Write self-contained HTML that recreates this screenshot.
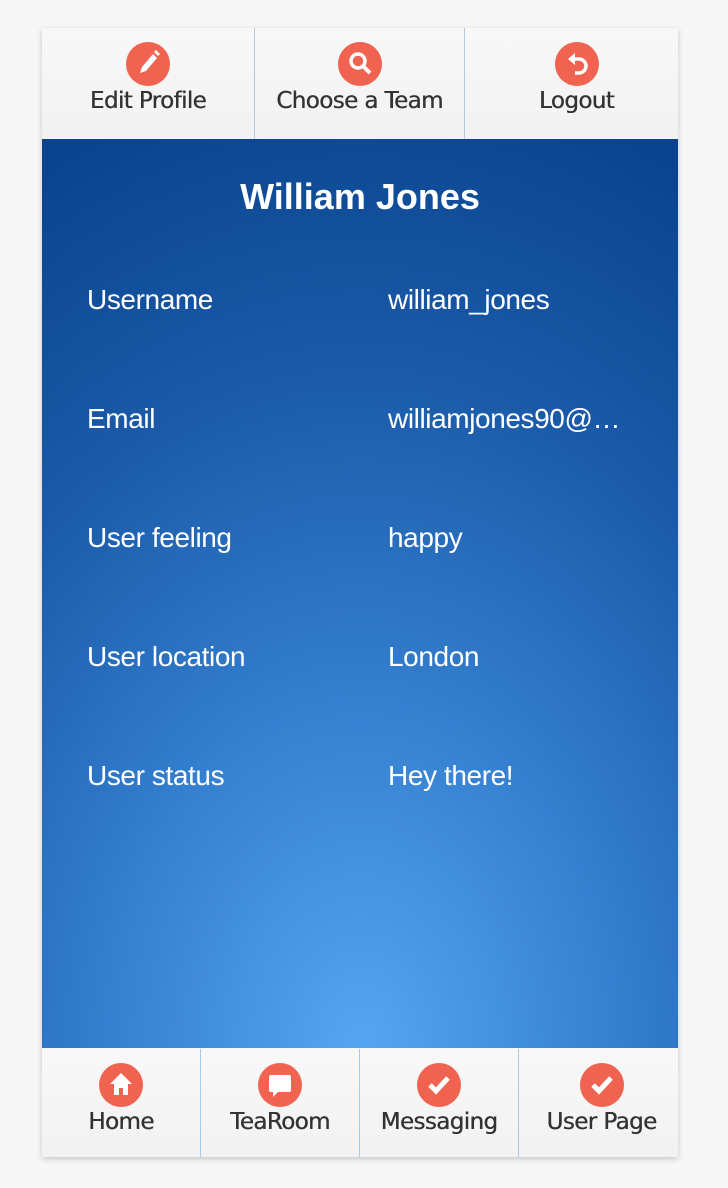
<!DOCTYPE html><html><head><style>
body{margin:0;width:728px;height:1188px;background:#f7f7f7;font-family:"Liberation Sans",sans-serif;position:relative;overflow:hidden}
.wrap{position:absolute;left:42px;top:28px;width:636px;height:1129px;box-shadow:0 2px 6px rgba(0,0,0,.2)}
.bar{position:absolute;left:0;width:636px;background:linear-gradient(#f8f8f8,#f2f2f2);display:flex}
.bar div{position:relative;text-align:center;color:#333;font-family:"DejaVu Sans","Liberation Sans",sans-serif;font-size:23px;letter-spacing:-0.6px;text-shadow:0.4px 0 0 #333;box-sizing:border-box}
.ic{position:absolute;left:50%;width:44px;height:44px;margin-left:-22px;border-radius:50%;background:#f06351}
.ic svg{width:44px;height:44px}
.main{position:absolute;left:0;top:111px;width:636px;height:909px;background:radial-gradient(ellipse 720px 980px at 320px 910px,#55a6f2 0%,#3580d0 35%,#1a5aa8 70%,#0a448e 100%);color:#fff}
.t{position:absolute;width:100%;text-align:center;top:37px;font-size:36px;font-weight:bold}
.r{position:absolute;font-size:28px;letter-spacing:-0.4px}
</style></head><body><div class="wrap">
<div class="bar" style="top:0;height:111px">
<div style="width:213px;border-right:1px solid #b8c8dc"><span class="ic" style="top:14px"><svg viewBox="0 0 44 44"><path d="M14 31l2-6 11-13 4 4-11 13z" fill="#fff"/><path d="M28 10l2-2 4 4-2 2z" fill="#fff"/></svg></span><span style="position:absolute;left:0;right:0;top:60px">Edit Profile</span></div>
<div style="width:210px;border-right:1px solid #b8c8dc"><span class="ic" style="top:14px"><svg viewBox="0 0 44 44"><circle cx="20" cy="19" r="7" fill="none" stroke="#fff" stroke-width="3.5"/><path d="M25 24l7 7" stroke="#fff" stroke-width="4"/></svg></span><span style="position:absolute;left:0;right:0;top:60px">Choose a Team</span></div>
<div style="width:213px;padding-left:10px"><span class="ic" style="top:14px;margin-left:-17px"><svg viewBox="0 0 44 44"><path d="M17 17h7a7 7 0 0 1 0 14h-4" fill="none" stroke="#fff" stroke-width="3.5"/><path d="M13 17l7-6v12z" fill="#fff"/></svg></span><span style="position:absolute;left:10px;right:0;top:60px">Logout</span></div>
</div>
<div class="main"><div class="t">William Jones</div>
<div class="r" style="left:45px;top:145px">Username</div><div class="r" style="left:346px;top:145px">william_jones</div>
<div class="r" style="left:45px;top:264px">Email</div><div class="r" style="left:346px;top:264px">williamjones90@…</div>
<div class="r" style="left:45px;top:383px">User feeling</div><div class="r" style="left:346px;top:383px">happy</div>
<div class="r" style="left:45px;top:502px">User location</div><div class="r" style="left:346px;top:502px">London</div>
<div class="r" style="left:45px;top:621px">User status</div><div class="r" style="left:346px;top:621px">Hey there!</div>
</div>
<div class="bar" style="top:1021px;height:108px">
<div style="width:159px;border-right:1px solid #a8c8ec"><span class="ic" style="top:14px"><svg viewBox="0 0 44 44"><path d="M22 10l-11 11h4v11h5v-7h4v7h5V21h4z" fill="#fff"/></svg></span><span style="position:absolute;left:0;right:0;top:60px">Home</span></div>
<div style="width:159px;border-right:1px solid #a8c8ec"><span class="ic" style="top:14px"><svg viewBox="0 0 44 44"><path d="M13 12h18a2 2 0 0 1 2 2v13a2 2 0 0 1-2 2H20l-5 5v-5h-2a2 2 0 0 1-2-2V14a2 2 0 0 1 2-2z" fill="#fff"/></svg></span><span style="position:absolute;left:0;right:0;top:60px">TeaRoom</span></div>
<div style="width:159px;border-right:1px solid #a8c8ec"><span class="ic" style="top:14px"><svg viewBox="0 0 44 44"><path d="M13 22l6 6 12-13" fill="none" stroke="#fff" stroke-width="5"/></svg></span><span style="position:absolute;left:0;right:0;top:60px">Messaging</span></div>
<div style="width:159px;padding-left:6px"><span class="ic" style="top:14px;margin-left:-19px"><svg viewBox="0 0 44 44"><path d="M13 22l6 6 12-13" fill="none" stroke="#fff" stroke-width="5"/></svg></span><span style="position:absolute;left:6px;right:0;top:60px">User Page</span></div>
</div>
</div></body></html>
